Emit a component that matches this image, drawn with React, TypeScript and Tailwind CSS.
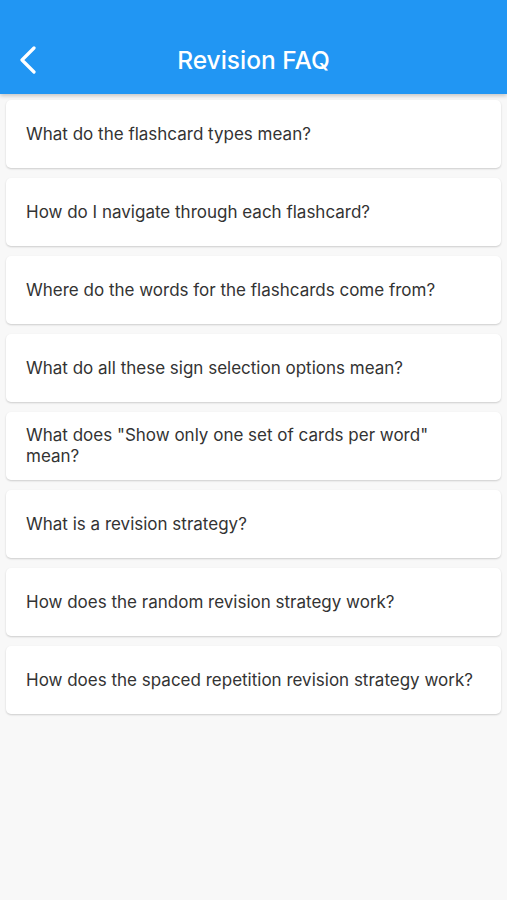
const QUESTIONS = [
  "What do the flashcard types mean?",
  "How do I navigate through each flashcard?",
  "Where do the words for the flashcards come from?",
  "What do all these sign selection options mean?",
  'What does "Show only one set of cards per word" mean?',
  "What is a revision strategy?",
  "How does the random revision strategy work?",
  "How does the spaced repetition revision strategy work?",
];

function FaqCard({ question }: { question: string }) {
  return (
    <div className="flex min-h-[68px] items-center rounded-[5px] bg-white py-[13px] pl-5 pr-4 shadow-[0_1px_2px_rgba(0,0,0,0.18)]">
      <p className="text-[17px] leading-[21px] text-[#333333]">{question}</p>
    </div>
  );
}

export default function App() {
  return (
    <div
      className="min-h-[900px] bg-[#f8f8f8]"
      style={{ fontFamily: "Inter, 'Noto Sans', sans-serif" }}
    >
      <header className="relative flex h-[94px] items-end bg-[#2196f3] pb-[14px] shadow-[0_2px_4px_rgba(0,0,0,0.2)]">
        <button className="flex h-[40px] w-[56px] items-center pl-[19px] text-white">
          <svg width="18" height="28" viewBox="0 0 18 28" fill="none">
            <path
              d="M15 2 L3 14 L15 26"
              stroke="currentColor"
              strokeWidth="3.2"
              strokeLinecap="round"
              strokeLinejoin="round"
            />
          </svg>
        </button>
        <h1 className="flex-1 pr-[56px] text-center text-[24.5px] font-medium leading-[40px] text-white">
          Revision FAQ
        </h1>
      </header>

      <main className="flex flex-col gap-[10px] px-[6px] pt-[6px]">
        {QUESTIONS.map((q) => (
          <FaqCard key={q} question={q} />
        ))}
      </main>
    </div>
  );
}
